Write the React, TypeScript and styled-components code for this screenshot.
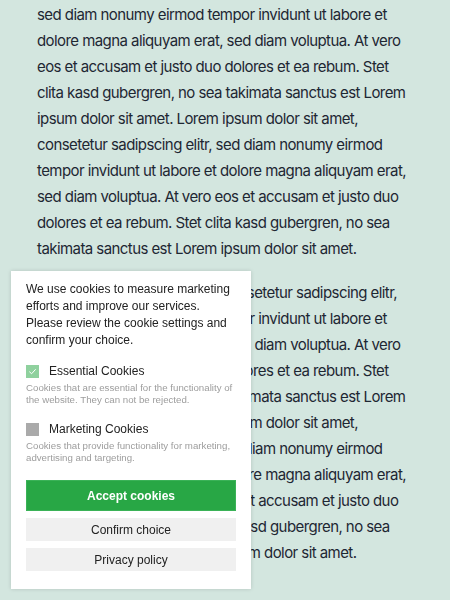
import React from "react";
import styled, { createGlobalStyle } from "styled-components";

const Global = createGlobalStyle`
  html, body { margin: 0; padding: 0; }
  body {
    background: #d3e6df;
    height: 600px;
    overflow: hidden;
  }
`;

const Page = styled.main`
  box-sizing: border-box;
  height: 600px;
  padding: 2px 0 0 37px;
  font-family: Inter, "Open Sans", sans-serif;
  color: #1e2733;
`;

const Para = styled.p`
  margin: 0 0 18px;
  font-size: 15px;
  line-height: 26px;
  letter-spacing: -0.57px;
  white-space: nowrap;
`;

const Banner = styled.aside`
  position: fixed;
  left: 11px;
  bottom: 11px;
  width: 240px;
  box-sizing: border-box;
  padding: 10px 15px 18px;
  background: #fff;
  box-shadow: 0 0 4px rgba(0, 0, 0, 0.15);
  font-family: "Liberation Sans", Arial, sans-serif;
  color: #222;
  display: flex;
  flex-direction: column;
`;

const Intro = styled.p`
  margin: 0 0 14px;
  font-size: 12px;
  line-height: 17px;
`;

const Option = styled.div`
  display: flex;
  flex-direction: column;
  margin-bottom: 15px;
`;

const OptionHead = styled.label`
  display: flex;
  align-items: center;
  gap: 10px;
  font-size: 12px;
  line-height: 17px;
  margin-bottom: 2px;
`;

const Box = styled.span<{ $checked?: boolean }>`
  width: 13px;
  height: 13px;
  flex: none;
  background: ${(p) => (p.$checked ? "#8fd19e" : "#aaaaaa")};
  display: flex;
  align-items: center;
  justify-content: center;
`;

const Desc = styled.p`
  margin: 0;
  font-size: 9.7px;
  line-height: 12px;
  color: #9d9d9d;
`;

const Button = styled.button<{ $primary?: boolean }>`
  box-sizing: border-box;
  border: ${(p) => (p.$primary ? "1px solid #3ab257" : "none")};
  margin: 0 0 7px;
  padding: 0;
  width: 100%;
  font-family: "Liberation Sans", Arial, sans-serif;
  font-size: 12px;
  height: ${(p) => (p.$primary ? "31px" : "23px")};
  font-weight: ${(p) => (p.$primary ? 700 : 400)};
  background: ${(p) => (p.$primary ? "#28a745" : "#f0f0f0")};
  color: ${(p) => (p.$primary ? "#fff" : "#222")};
  &:last-child { margin-bottom: 0; }
`;

const Buttons = styled.div`
  display: flex;
  flex-direction: column;
  margin-top: 1px;
`;

const Check = () => (
  <svg width="9" height="9" viewBox="0 0 10 10" fill="none">
    <path d="M1.5 5.2 L4 7.5 L8.5 2.5" stroke="#fff" strokeWidth="1.1" />
  </svg>
);

const lines1 = [
  "sed diam nonumy eirmod tempor invidunt ut labore et",
  "dolore magna aliquyam erat, sed diam voluptua. At vero",
  "eos et accusam et justo duo dolores et ea rebum. Stet",
  "clita kasd gubergren, no sea takimata sanctus est Lorem",
  "ipsum dolor sit amet. Lorem ipsum dolor sit amet,",
  "consetetur sadipscing elitr, sed diam nonumy eirmod",
  "tempor invidunt ut labore et dolore magna aliquyam erat,",
  "sed diam voluptua. At vero eos et accusam et justo duo",
  "dolores et ea rebum. Stet clita kasd gubergren, no sea",
  "takimata sanctus est Lorem ipsum dolor sit amet.",
];

const lines2 = [
  "Lorem ipsum dolor sit amet, consetetur sadipscing elitr,",
  "sed diam nonumy eirmod tempor invidunt ut labore et",
  "dolore magna aliquyam erat, sed diam voluptua. At vero",
  "eos et accusam et justo duo dolores et ea rebum. Stet",
  "clita kasd gubergren, no sea takimata sanctus est Lorem",
  "ipsum dolor sit amet. Lorem ipsum dolor sit amet,",
  "consetetur sadipscing elitr, sed diam nonumy eirmod",
  "tempor invidunt ut labore et dolore magna aliquyam erat,",
  "sed diam voluptua. At vero eos et accusam et justo duo",
  "dolores et ea rebum. Stet clita kasd gubergren, no sea",
  "takimata sanctus est Lorem ipsum dolor sit amet.",
];

const Lines = ({ lines }: { lines: string[] }) => (
  <>
    {lines.map((l, i) => (
      <React.Fragment key={i}>
        {l}
        {i < lines.length - 1 && <br />}
      </React.Fragment>
    ))}
  </>
);

export default function App() {
  return (
    <>
      <Global />
      <Page>
        <Para>
          <Lines lines={lines1} />
        </Para>
        <Para>
          <Lines lines={lines2} />
        </Para>
      </Page>
      <Banner>
        <Intro>
          We use cookies to measure marketing efforts and improve our services. Please review the
          cookie settings and confirm your choice.
        </Intro>
        <Option>
          <OptionHead>
            <Box $checked>
              <Check />
            </Box>
            Essential Cookies
          </OptionHead>
          <Desc>Cookies that are essential for the functionality of the website. They can not be rejected.</Desc>
        </Option>
        <Option>
          <OptionHead>
            <Box />
            Marketing Cookies
          </OptionHead>
          <Desc>Cookies that provide functionality for marketing, advertising and targeting.</Desc>
        </Option>
        <Buttons>
          <Button $primary>Accept cookies</Button>
          <Button>Confirm choice</Button>
          <Button>Privacy policy</Button>
        </Buttons>
      </Banner>
    </>
  );
}
